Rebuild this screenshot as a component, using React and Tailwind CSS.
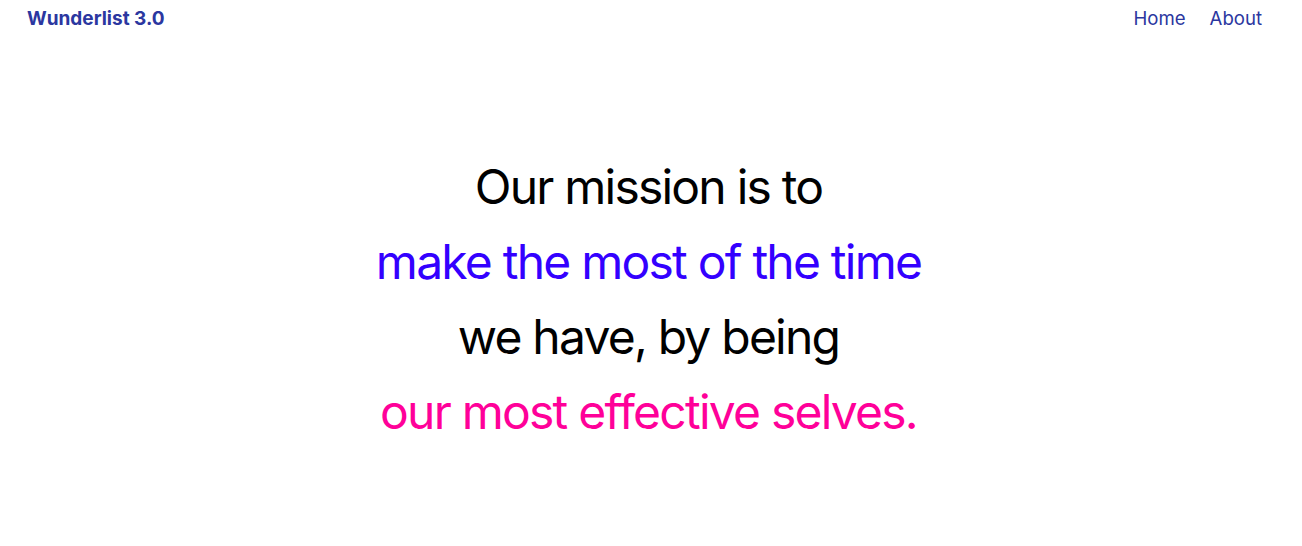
export default function App() {
  return (
    <div className="min-h-screen bg-white" style={{ fontFamily: 'Inter, "Noto Sans", sans-serif' }}>
      <header className="flex items-center justify-between pl-[27px] pr-[40px] h-[38px]">
        <a className="text-[19px] font-bold text-[#2b37a0]">Wunderlist 3.0</a>
        <nav className="flex gap-[24px] text-[18.6px] text-[#2b37a0]">
          <a>Home</a>
          <a>About</a>
        </nav>
      </header>
      <main className="flex flex-col items-center pt-[111px] pr-[5px] text-[48px] leading-[75px] tracking-[-0.037em] text-center">
        <p className="text-black">Our mission is to</p>
        <p className="text-[#3300ff]">make the most of the time</p>
        <p className="text-black">we have, by being</p>
        <p className="text-[#ff0099]">our most effective selves.</p>
      </main>
    </div>
  );
}
